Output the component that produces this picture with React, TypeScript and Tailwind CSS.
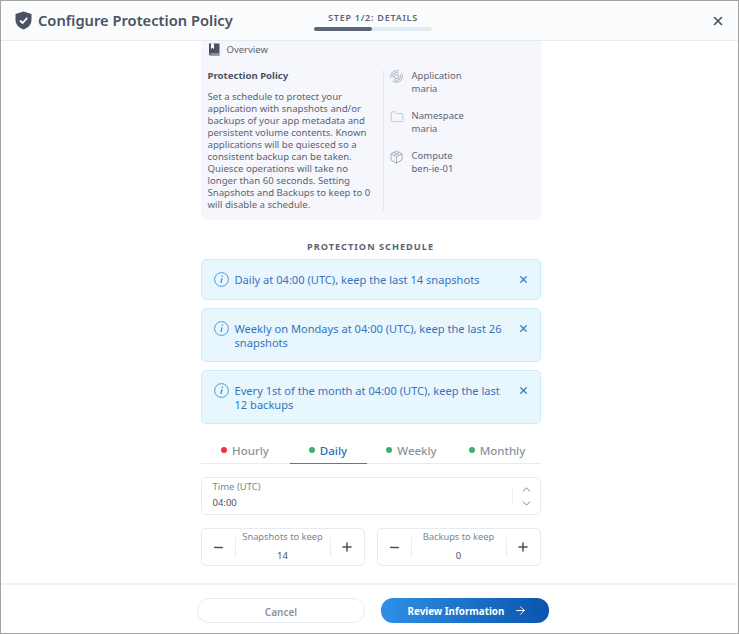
import React from 'react';
import { ArrowRight, ChevronDown, ChevronUp, Folder, Minus, Plus, X } from 'lucide-react';

const alerts = [
  { text: 'Daily at 04:00 (UTC), keep the last 14 snapshots', tall: false },
  { text: 'Weekly on Mondays at 04:00 (UTC), keep the last 26 snapshots', tall: true },
  { text: 'Every 1st of the month at 04:00 (UTC), keep the last 12 backups', tall: true },
];

const tabs = [
  { label: 'Hourly', dot: 'bg-[#ee3344]', active: false, width: 'w-[89px]' },
  { label: 'Daily', dot: 'bg-[#3fae74]', active: true, width: 'w-[77px]' },
  { label: 'Weekly', dot: 'bg-[#3fae74]', active: false, width: 'w-[90px]' },
  { label: 'Monthly', dot: 'bg-[#3fae74]', active: false, width: 'w-[81px]' },
];

const ShieldIcon = () => (
  <svg width="17" height="19" viewBox="0 0 17 19">
    <path d="M8.5 0.5 L16.5 3 V9 C16.5 13.5 13 17 8.5 18.5 C4 17 0.5 13.5 0.5 9 V3 Z" fill="#4a5263" />
    <path d="M5 9.5 L7.6 12 L12.2 6.8" fill="none" stroke="#fff" strokeWidth="1.8" />
  </svg>
);

const BookIcon = () => (
  <svg width="11" height="13" viewBox="0 0 11 13">
    <path d="M0 0.5 H10.5 V12.5 H1.5 A1.5 1.5 0 0 1 0 11 Z" fill="#4a5263" />
    <path d="M2 0.5 H5 V6 L3.5 4.8 L2 6 Z" fill="#fff" />
    <path d="M1.5 11 H10.5" stroke="#c9ced8" strokeWidth="1" />
  </svg>
);

const AppIcon = () => (
  <svg width="13" height="13" viewBox="0 0 13 13" fill="none" stroke="#8b929f" strokeWidth="0.7">
    <circle cx="6.5" cy="6.5" r="5.8" strokeDasharray="13 3" />
    <circle cx="6.5" cy="6.5" r="3.9" strokeDasharray="9 2" />
    <circle cx="6.5" cy="6.5" r="2" />
  </svg>
);

const CubeIcon = () => (
  <svg width="13" height="14" viewBox="0 0 13 14" fill="none" stroke="#8b929f" strokeWidth="0.7">
    <path d="M6.5 0.8 L12 3.8 V10 L6.5 13.2 L1 10 V3.8 Z" />
    <path d="M1 3.8 L6.5 7 L12 3.8 M6.5 7 V13.2 M3.7 2.3 L9.3 5.4 M9.3 2.3 L3.7 5.4" />
  </svg>
);

const InfoItalicIcon = () => (
  <svg width="15" height="15" viewBox="0 0 15 15" fill="none" className="shrink-0">
    <circle cx="7.5" cy="7.5" r="6.9" stroke="#3e8fd3" strokeWidth="0.9" />
    <path d="M7.9 6.4 L7 11" stroke="#3e8fd3" strokeWidth="1.3" />
    <circle cx="8.3" cy="4.2" r="0.8" fill="#3e8fd3" />
  </svg>
);

const Stepper = ({ label, value }: { label: string; value: string }) => (
  <div className="flex h-[38px] w-[164px] items-center rounded-[5px] border border-[#e6ebf2] bg-white">
    <button className="flex w-[33px] justify-center text-[#4a5263]">
      <Minus size={13} strokeWidth={2.8} />
    </button>
    <div className="h-[20px] w-px bg-[#e9edf3]" />
    <div className="flex-1 pb-[3px] text-center">
      <div className="text-[9.3px] leading-[13px] text-[#7b8494]">{label}</div>
      <div className="mt-[6px] text-[9.5px] leading-[13px] text-[#4a5263]">{value}</div>
    </div>
    <div className="h-[20px] w-px bg-[#e9edf3]" />
    <button className="flex w-[33px] justify-center text-[#4a5263]">
      <Plus size={14} strokeWidth={2.6} />
    </button>
  </div>
);

export default function App() {
  return (
    <div className="flex h-[634px] w-[739px] flex-col border border-[#a3a3a3] bg-white font-['Noto_Sans','Open_Sans',sans-serif] text-[#4a5263]">
      <header className="relative flex h-[40px] shrink-0 items-center justify-between border-b border-[#e6ebf2] bg-[#fbfcfd] pl-[14px] pr-[13px]">
        <div className="flex items-center gap-[6px]">
          <ShieldIcon />
          <h1 className="text-[14.7px] font-semibold text-[#4a5263]">Configure Protection Policy</h1>
        </div>
        <div className="absolute left-[313px] top-[10px] w-[118px]">
          <div className="text-center text-[9px] font-semibold leading-[13px] tracking-[0.75px] text-[#5b6474]">STEP 1/2: DETAILS</div>
          <div className="mt-[3px] h-[4px] w-full rounded-full bg-[#e3ebf3]">
            <div className="h-[4px] w-[58px] rounded-full bg-[#5b6577]" />
          </div>
        </div>
        <X size={14} strokeWidth={2.8} className="text-[#4a5263]" />
      </header>

      <main className="flex min-h-0 flex-1 flex-col items-center overflow-hidden pl-[2px]">
        <div className="w-[340px]">
          <section className="flex h-[179px] rounded-b-[6px] bg-[#f5f7fc] pl-[7px] pt-[2px]">
            <div className="w-[175px]">
              <div className="flex items-center gap-[7px] pl-px text-[9.5px] leading-[13px] text-[#5b6474]">
                <BookIcon />
                <span>Overview</span>
              </div>
              <h2 className="mt-[13px] text-[9.6px] font-bold leading-[13px] text-[#4a5263]">Protection Policy</h2>
              <p className="mt-[9px] w-[168px] text-[9.6px] leading-[12px] text-[#5b6474]">
                Set a schedule to protect your application with snapshots and/or backups of your app metadata and persistent volume contents. Known applications will be quiesced so a consistent backup can be taken. Quiesce operations will take no longer than 60 seconds. Setting Snapshots and Backups to keep to 0 will disable a schedule.
              </p>
            </div>
            <div className="mt-[27px] h-[142px] w-px bg-[#e3eaf1]" />
            <div className="flex flex-col gap-[14px] pl-[6px] pt-[26px] text-[9.5px] leading-[13px] text-[#5b6474]">
              <div className="flex gap-[9px]">
                <div className="flex w-[13px] justify-center pt-px"><AppIcon /></div>
                <div><div>Application</div><div>maria</div></div>
              </div>
              <div className="flex gap-[9px]">
                <div className="w-[13px] pt-px"><Folder size={14} strokeWidth={0.8} className="text-[#8b929f]" /></div>
                <div><div>Namespace</div><div>maria</div></div>
              </div>
              <div className="flex gap-[9px]">
                <div className="w-[13px] pt-px"><CubeIcon /></div>
                <div><div>Compute</div><div>ben-ie-01</div></div>
              </div>
            </div>
          </section>

          <h3 className="mt-[20px] text-center text-[9.2px] font-bold leading-[13px] tracking-[1px] text-[#5b6474]">PROTECTION SCHEDULE</h3>

          <div className="mt-[6px] flex flex-col gap-[8px]">
            {alerts.map((alert) => (
              <div key={alert.text} className={`flex rounded-[5px] border border-[#cfeafc] bg-[#e8f6fe] pl-[12px] pr-[11px] pt-[12px] ${alert.tall ? 'h-[54px]' : 'h-[41px]'}`}>
                <InfoItalicIcon />
                <p className="ml-[6px] flex-1 pt-px text-[11.1px] leading-[14px] text-[#3673bd]">{alert.text}</p>
                <X size={11} strokeWidth={3} className="ml-[8px] mt-[2px] shrink-0 text-[#3e7fc8]" />
              </div>
            ))}
          </div>

          <nav className="mt-[15px] flex h-[25px] border-b border-[#e6ebf2]">
            {tabs.map((tab) => (
              <div key={tab.label} className={`relative flex items-center justify-center gap-[5px] text-[11.5px] font-medium ${tab.width} ${tab.active ? 'text-[#2a6cbd]' : 'text-[#8a92a0]'}`}>
                <span className={`mb-[3px] h-[6px] w-[6px] rounded-full ${tab.dot}`} />
                {tab.label}
                {tab.active && <span className="absolute bottom-[-1px] left-0 right-0 h-[1.5px] bg-[#3f7fc6]" />}
              </div>
            ))}
          </nav>

          <div className="mt-[13px] flex h-[38px] items-center rounded-[5px] border border-[#e6ebf2] pl-[11px] pr-[7px]">
            <div className="flex-1 pb-[3px]">
              <div className="text-[9.5px] leading-[13px] text-[#7b8494]">Time (UTC)</div>
              <div className="mt-[3px] text-[9.5px] leading-[13px] text-[#4a5263]">04:00</div>
            </div>
            <div className="h-[15px] w-px bg-[#e9edf3]" />
            <div className="ml-[7px] flex flex-col gap-[1px] text-[#4f5767]">
              <ChevronUp size={13} strokeWidth={1.4} />
              <ChevronDown size={13} strokeWidth={1.4} />
            </div>
          </div>

          <div className="mt-[13px] flex justify-between">
            <Stepper label="Snapshots to keep" value="14" />
            <Stepper label="Backups to keep" value="0" />
          </div>
        </div>
      </main>

      <footer className="flex h-[50px] shrink-0 items-start gap-[16px] border-t-[2px] border-[#eef1f5] bg-white pl-[196px] pt-[13px]">
        <button className="h-[25px] w-[168px] rounded-[12px] border border-[#e6ebf2] bg-white pt-[3px] text-[10px] font-semibold text-[#8a92a0]">Cancel</button>
        <button className="flex h-[25px] w-[168px] items-center justify-center gap-[10px] rounded-[12px] bg-gradient-to-r from-[#2f8fe6] to-[#0b55ad] pl-[5px] pt-[3px] text-[9.8px] font-bold text-white">
          Review Information
          <ArrowRight size={13} strokeWidth={1.8} className="mt-[-3px]" />
        </button>
      </footer>
    </div>
  );
}
